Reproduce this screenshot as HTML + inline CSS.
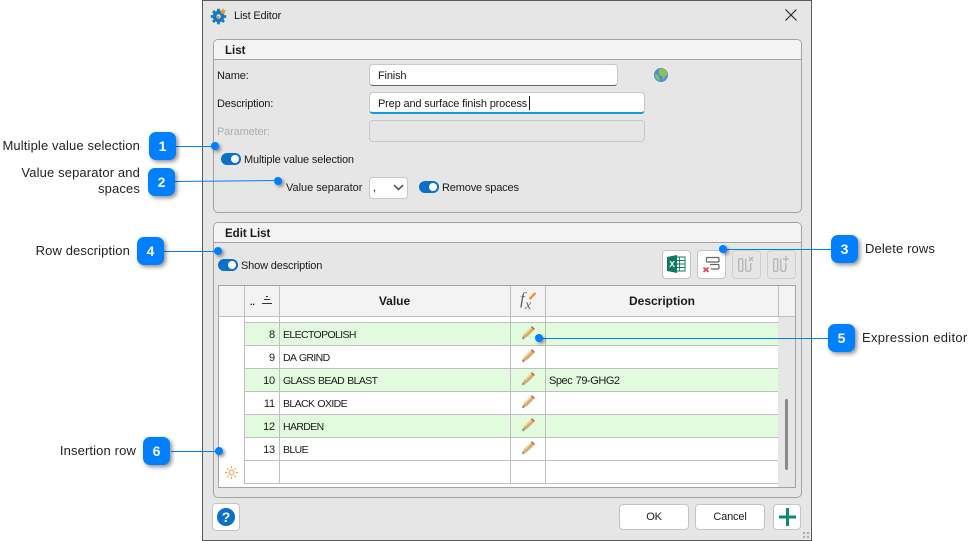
<!DOCTYPE html>
<html><head><meta charset="utf-8"><style>
html,body{margin:0;padding:0;background:#fff}
body{width:968px;height:541px;position:relative;overflow:hidden;font-family:"Liberation Sans",sans-serif;font-size:11px;color:#1a1a1a}
div,span{position:absolute;box-sizing:border-box}
.t{white-space:nowrap;line-height:14px;letter-spacing:-.16px}
.g{background:#e6e6e6;border:1px solid #a3a3a3;border-radius:5px}
.gh{left:0;right:0;top:0;height:20px;background:#f3f3f3;border-bottom:1px solid #a3a3a3;border-radius:4px 4px 0 0}
.b{font-weight:bold;font-size:11.5px;letter-spacing:0}
.inp{background:#fff;border:1px solid #c8c8c8;border-radius:4px}
.tog{width:20px;height:12px;border-radius:6px;background:#0a70c8}
.tog:after{content:"";position:absolute;right:2px;top:2px;width:8px;height:8px;border-radius:50%;background:#fff}
.btn{background:#fff;border:1px solid #c4c4c4;border-radius:4px;letter-spacing:-.16px}
.dis{background:#e6e6e6;border:1px solid #cfcfcf;border-radius:4px}
.hl{background:#bfbfbf;height:1px}
.vl{background:#bfbfbf;width:1px}
.grn{background:#e2fbdf;left:245px;width:533px;height:22px}
.cap{font-size:10.5px;letter-spacing:-.62px;word-spacing:.8px}
.c{font-family:"Liberation Sans",sans-serif;font-size:13px;color:#222;white-space:nowrap;line-height:16px;letter-spacing:.13px}
.r{text-align:right}
.bd{width:27px;height:28px;background:#0080ff;border-radius:7px;color:#fff;font-weight:bold;font-size:14px;line-height:28px;text-align:center;box-shadow:2px 2px 4px rgba(0,0,0,.45)}
.dot{width:8px;height:8px;background:#0080ff;border-radius:50%;box-shadow:2px 2px 3px rgba(0,0,0,.4)}
</style></head><body>

<!-- dialog -->
<div style="left:202px;top:0;width:610px;height:541px;background:#e6e6e6;border:1px solid #5a5a5a"></div>

<!-- title -->
<svg style="position:absolute;left:210px;top:7px" width="18" height="18" viewBox="0 0 18 18">
<g fill="#1678c4"><circle cx="8.500" cy="9.500" r="5.800"/><g stroke="#1678c4" stroke-width="2.800"><path d="M8.500 1.800v15.400M.8 9.500h15.400M3 4l11 11M14 4L3 15"/></g></g>
<circle cx="8.500" cy="9.500" r="2.200" fill="#e6e6e6"/><circle cx="8" cy="10" r="1.400" fill="#f0921c"/>
<path d="M13 .8l1 2.200 2.300.4-1.700 1.600.4 2.300-2-1.100-2 1.100.4-2.300-1.700-1.600 2.300-.4z" fill="#f79a1e"/></svg>
<div class="t" style="left:234px;top:9px">List Editor</div>
<svg style="position:absolute;left:785px;top:9px" width="12" height="12"><path d="M.5.5l11 11M11.500.5l-11 11" stroke="#222" stroke-width="1.100" fill="none"/></svg>

<!-- group List -->
<div class="g" style="left:213px;top:39px;width:589px;height:174px"><div class="gh"></div></div>
<div class="t b" style="left:225px;top:44px">List</div>
<div class="t" style="left:217px;top:69px">Name:</div>
<div class="inp" style="left:369px;top:64px;width:249px;height:22px;border-bottom-color:#666"></div>
<div class="t" style="left:378px;top:69px">Finish</div>
<svg style="position:absolute;left:654px;top:68px" width="14" height="14" viewBox="0 0 14 14"><circle cx="7" cy="7" r="7" fill="#4a90d9"/><path d="M5 1.500c2-1.200 5-1 7 1 1.300 2 1.500 3.500 1 5l-2 1-1 2.500-1.500.5.300-3-2.300-1-2-2.500z" fill="#8cc152"/><path d="M1 6l3 1 1 2.500 1 3-1.500-.3C2.500 11 1 9 1 6z" fill="#8cc152"/></svg>
<div class="t" style="left:217px;top:97px">Description:</div>
<div class="inp" style="left:369px;top:92px;width:276px;height:22px;border-bottom:2px solid #0f9ae0"></div>
<div class="t" style="left:378px;top:97px">Prep and surface finish process</div>
<div style="left:529px;top:96px;width:1px;height:14px;background:#111"></div>
<div class="t" style="left:217px;top:125px;color:#aeaeae">Parameter:</div>
<div style="left:369px;top:120px;width:276px;height:22px;border:1px solid #c8c8c8;border-radius:4px;background:#e6e6e6"></div>
<div class="tog" style="left:221px;top:153px"></div>
<div class="t" style="left:244px;top:153px">Multiple value selection</div>
<div class="t" style="left:286px;top:181px;letter-spacing:-.03px">Value separator</div>
<div class="inp" style="left:369px;top:177px;width:39px;height:22px"></div>
<div class="t" style="left:373px;top:181px">,</div>
<svg style="position:absolute;left:393px;top:184px" width="11" height="7"><path d="M1 1l4.500 4.500L10 1" stroke="#444" stroke-width="1.500" fill="none"/></svg>
<div class="tog" style="left:419px;top:181px"></div>
<div class="t" style="left:442px;top:181px">Remove spaces</div>

<!-- group Edit List -->
<div class="g" style="left:213px;top:222px;width:589px;height:276px"><div class="gh"></div></div>
<div class="t b" style="left:225px;top:227px">Edit List</div>
<div class="tog" style="left:218px;top:259px"></div>
<div class="t" style="left:241px;top:259px">Show description</div>

<div class="btn" style="left:662px;top:250px;width:29px;height:29px"></div>
<svg style="position:absolute;left:666px;top:254px" width="20" height="20" viewBox="0 0 20 20"><rect x="9" y="3" width="10" height="14" fill="#fff" stroke="#0f7a5e"/><path d="M9 6.500h10M9 10h10M9 13.500h10M13.500 3v14" stroke="#0f7a5e" stroke-width=".9"/><path d="M1 3l10-2v18L1 17z" fill="#0f7a5e"/><text x="3.300" y="13" font-family="Liberation Sans" font-weight="bold" font-size="8.500" fill="#fff">X</text></svg>
<div class="btn" style="left:697px;top:250px;width:29px;height:29px"></div>
<svg style="position:absolute;left:701px;top:254px" width="22" height="22" viewBox="0 0 22 22"><rect x="5.500" y="3.500" width="12.500" height="4.500" rx="1" fill="none" stroke="#666" stroke-width="1.200"/><path d="M9 10.500h8a1 1 0 0 1 1 1v2.500a1 1 0 0 1-1 1H10" fill="none" stroke="#666" stroke-width="1.200"/><path d="M2.500 13.500l5 4.500M7.500 13.500l-5 4.500" stroke="#e8425a" stroke-width="1.800"/></svg>
<div class="dis" style="left:732px;top:250px;width:29px;height:29px"></div>
<svg style="position:absolute;left:737px;top:254px" width="22" height="22" viewBox="0 0 22 22" fill="none" stroke="#b9b9b9" stroke-width="1.500"><rect x="1.700" y="4.700" width="4" height="12.600" rx="1"/><path d="M8.700 4.500v10.800a2 2 0 0 0 2 2h1a2 2 0 0 0 2-2V9"/><path d="M12 3l4 4M16 3l-4 4"/></svg>
<div class="dis" style="left:767px;top:250px;width:29px;height:29px"></div>
<svg style="position:absolute;left:772px;top:254px" width="22" height="22" viewBox="0 0 22 22" fill="none" stroke="#b9b9b9" stroke-width="1.500"><rect x="1.700" y="4.700" width="4" height="12.600" rx="1"/><path d="M8.700 4.500v10.800a2 2 0 0 0 2 2h1a2 2 0 0 0 2-2V9"/><path d="M14 2v6M11 5h6"/></svg>

<!-- table -->
<div style="left:218px;top:285px;width:578px;height:203px;background:#fff;border:1px solid #a3a3a3"></div>
<div style="left:219px;top:286px;width:576px;height:30px;background:#f3f3f3"></div>
<div class="hl" style="left:219px;top:316px;width:576px"></div>
<div style="left:778px;top:317px;width:17px;height:170px;background:#e6e6e6"></div>
<div style="left:785px;top:399px;width:3px;height:71px;background:#8a8a8a;border-radius:2px"></div>

<div class="grn" style="top:323px"></div>
<div class="grn" style="top:369px"></div>
<div class="grn" style="top:415px"></div>

<div class="hl" style="left:245px;top:322px;width:533px"></div>
<div class="hl" style="left:245px;top:345px;width:533px"></div>
<div class="hl" style="left:245px;top:368px;width:533px"></div>
<div class="hl" style="left:245px;top:391px;width:533px"></div>
<div class="hl" style="left:245px;top:414px;width:533px"></div>
<div class="hl" style="left:245px;top:437px;width:533px"></div>
<div class="hl" style="left:245px;top:460px;width:533px"></div>
<div class="hl" style="left:245px;top:483px;width:533px"></div>

<div class="vl" style="left:244px;top:286px;height:198px"></div>
<div class="vl" style="left:279px;top:286px;height:198px"></div>
<div class="vl" style="left:510px;top:286px;height:198px"></div>
<div class="vl" style="left:545px;top:286px;height:198px"></div>
<div class="vl" style="left:778px;top:286px;height:30px"></div>

<div class="t" style="left:250px;top:295px;font-size:9px;font-weight:bold">..</div>
<svg style="position:absolute;left:261px;top:295px" width="13" height="10"><path d="M5 1.500h2M3 4.500h6M1 8.500h10" stroke="#333" stroke-width="1"/></svg>
<div class="t b" style="left:280px;width:229px;top:294px;text-align:center;font-size:12px">Value</div>
<div class="t b" style="left:546px;width:232px;top:294px;text-align:center;font-size:12px">Description</div>
<div class="t" style="left:520px;top:292px;font-family:'Liberation Serif',serif;font-style:italic;font-size:17px;color:#666;letter-spacing:0">f</div>
<div class="t" style="left:525px;top:299px;font-family:'Liberation Serif',serif;font-style:italic;font-size:14px;color:#666;letter-spacing:0">x</div>
<svg style="position:absolute;left:528px;top:291px" width="10" height="10"><path d="M1.500 8l6-6" stroke="#f08c1e" stroke-width="2.200"/></svg>

<div class="t r" style="left:246px;width:29px;top:328px">8</div>
<div class="t r" style="left:246px;width:29px;top:351px">9</div>
<div class="t r" style="left:246px;width:29px;top:374px">10</div>
<div class="t r" style="left:246px;width:29px;top:397px">11</div>
<div class="t r" style="left:246px;width:29px;top:420px">12</div>
<div class="t r" style="left:246px;width:29px;top:443px">13</div>
<div class="t cap" style="left:283px;top:328px">ELECTOPOLISH</div>
<div class="t cap" style="left:283px;top:351px">DA GRIND</div>
<div class="t cap" style="left:283px;top:374px">GLASS BEAD BLAST</div>
<div class="t cap" style="left:283px;top:397px">BLACK OXIDE</div>
<div class="t cap" style="left:283px;top:420px">HARDEN</div>
<div class="t cap" style="left:283px;top:443px">BLUE</div>
<div class="t" style="left:549px;top:374px;letter-spacing:-.45px;word-spacing:.8px">Spec 79-GHG2</div>

<svg style="position:absolute;left:0;top:0" width="968" height="541">
<defs><g id="p"><path d="M1 13l2.500-5.500L10 1l3 3-6.500 6.500z" fill="#dcae68"/><path d="M3.500 7.500L10 1l1 1-6.500 6.500z" fill="#f3d795"/><path d="M10 1l1-.8 2.800 2.800-.8 1z" fill="#b8444a"/><path d="M1 13l.8-3 2.200 2.200z" fill="#8f8676"/><path d="M2 13.500l9-8" stroke="#aaa" stroke-width=".8" fill="none" opacity=".6"/></g></defs>
<use href="#p" x="521" y="326"/><use href="#p" x="521" y="349"/><use href="#p" x="521" y="372"/><use href="#p" x="521" y="395"/><use href="#p" x="521" y="418"/><use href="#p" x="521" y="441"/>
<g stroke="#f39a2e" stroke-width="1" fill="none"><circle cx="231.500" cy="472.500" r="2.500"/><path d="M231.500 466v2M231.500 477v2M225 472.500h2M236 472.500h2M227 468l1.300 1.300M236 468l-1.300 1.300M227 477l1.300-1.300M236 477l-1.300-1.300"/></g>
<g stroke="#0080ff" stroke-width="1" fill="none">
<path d="M176 146.500h39"/><path d="M175 181.500L278 180.500"/><path d="M164 251.500h54"/><path d="M723 249.500h108"/><path d="M539 338.500h289"/><path d="M171 451.500h47"/>
</g></svg>

<!-- bottom buttons -->
<div class="btn" style="left:212px;top:503px;width:28px;height:28px"></div>
<div style="left:217px;top:508px;width:18px;height:18px;border-radius:50%;background:#0a70c8;color:#fff;font-weight:bold;font-size:14px;line-height:18px;text-align:center">?</div>
<div class="btn" style="left:619px;top:504px;width:70px;height:26px;text-align:center;line-height:25px">OK</div>
<div class="btn" style="left:695px;top:504px;width:70px;height:26px;text-align:center;line-height:25px">Cancel</div>
<div class="btn" style="left:773px;top:504px;width:28px;height:26px"></div>
<svg style="position:absolute;left:778px;top:507px" width="19" height="20"><path d="M9.500 1v18M1 10h17" stroke="#0f8a72" stroke-width="3"/></svg>
<svg style="position:absolute;left:802px;top:531px" width="8" height="8"><g fill="#aaa"><rect x="1" y="1" width="2" height="2"/><rect x="5" y="1" width="2" height="2"/><rect x="1" y="5" width="2" height="2"/><rect x="5" y="5" width="2" height="2"/></g></svg>

<!-- callouts -->
<div class="dot" style="left:211px;top:142px"></div>
<div class="dot" style="left:274px;top:177px"></div>
<div class="dot" style="left:214px;top:247px"></div>
<div class="dot" style="left:719px;top:245px"></div>
<div class="dot" style="left:535px;top:334px"></div>
<div class="dot" style="left:215px;top:447px"></div>

<div class="bd" style="left:149px;top:132px">1</div>
<div class="bd" style="left:148px;top:168px">2</div>
<div class="bd" style="left:831px;top:235px">3</div>
<div class="bd" style="left:137px;top:237px">4</div>
<div class="bd" style="left:828px;top:324px">5</div>
<div class="bd" style="left:143px;top:437px">6</div>

<div class="c r" style="left:0;width:140px;top:138px">Multiple value selection</div>
<div class="c r" style="left:0;width:140px;top:165px">Value separator and</div>
<div class="c r" style="left:0;width:140px;top:181px">spaces</div>
<div class="c r" style="left:0;width:130px;top:243px">Row description</div>
<div class="c r" style="left:0;width:136px;top:443px">Insertion row</div>
<div class="c" style="left:865px;top:241px">Delete rows</div>
<div class="c" style="left:862px;top:330px;letter-spacing:.3px">Expression editor</div>
</body></html>
